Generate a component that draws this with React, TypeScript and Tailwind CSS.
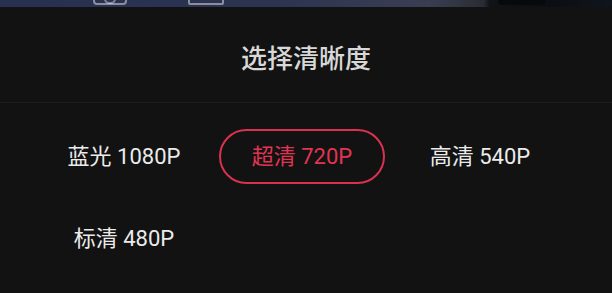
import React from "react";

const options = [
  { label: "蓝光 1080P", active: false },
  { label: "超清 720P", active: true },
  { label: "高清 540P", active: false },
  { label: "标清 480P", active: false },
];

export default function App() {
  return (
    <div
      className="w-[612px] h-[293px] overflow-hidden flex flex-col bg-[#121212]"
      style={{ fontFamily: 'Roboto, "Noto Sans CJK SC", sans-serif' }}
    >
      <div className="relative h-[7px] shrink-0 bg-[linear-gradient(90deg,#283050_0%,#2c3452_45%,#3a3e52_70%,#2a2c34_79%,#121317_80%,#0c0e14_90%,#10141c_100%)]">
        <div className="absolute left-[93px] top-[-6px] w-[34px] h-[11px] border-x-2 border-b-2 border-white/45 rounded-b-[4px]" />
        <div className="absolute left-[104px] top-[-6px] w-[12px] h-[10px] border-2 border-white/40 rounded-full" />
        <div className="absolute left-[188px] top-[-6px] w-[36px] h-[11px] border-x-2 border-b-2 border-white/45 rounded-b-[2px]" />
        <div className="absolute left-[498px] top-[-4px] w-[48px] h-[9px] rounded-full bg-[#08090c]" />
      </div>
      <div className="h-[96px] shrink-0 flex items-center justify-center border-b border-[#1c1c1c] pt-[3px]">
        <span className="text-[26px] font-medium text-[#d8d8d8]" style={{ fontFamily: '"Noto Sans CJK SC", sans-serif' }}>
          选择清晰度
        </span>
      </div>
      <div className="grid grid-cols-[166px_166px_166px] gap-x-[12px] gap-y-[27px] pl-[41px] pt-[26px]">
        {options.map((o) => (
          <div
            key={o.label}
            className={
              "h-[55px] rounded-full flex items-center justify-center text-[22px] " +
              (o.active
                ? "border-2 border-[#d9324f] text-[#e03552]"
                : "border-2 border-transparent text-[#ebebeb]")
            }
          >
            {o.label}
          </div>
        ))}
      </div>
    </div>
  );
}
